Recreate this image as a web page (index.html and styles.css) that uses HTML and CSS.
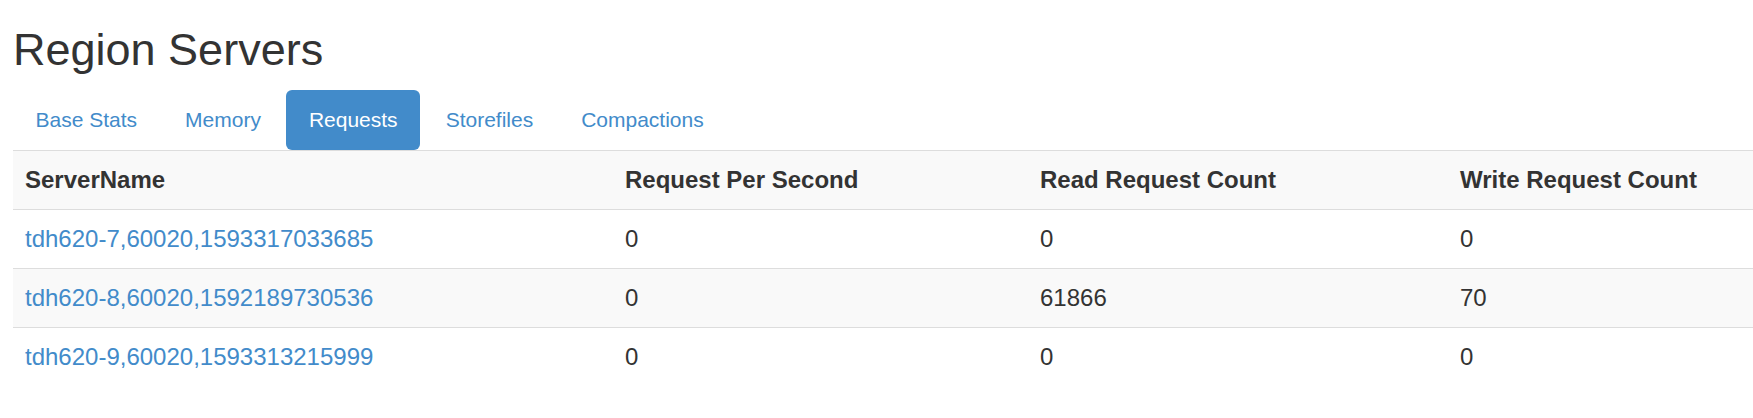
FILE: index.html
```html
<!DOCTYPE html>
<html>
<head>
<meta charset="utf-8">
<title>Region Servers</title>
<link rel="stylesheet" href="styles.css">
</head>
<body>
<div class="page">
  <h2 class="title">Region Servers</h2>
  <ul class="pills">
    <li><a href="#">Base Stats</a></li>
    <li><a href="#">Memory</a></li>
    <li class="active"><a href="#">Requests</a></li>
    <li><a href="#">Storefiles</a></li>
    <li><a href="#">Compactions</a></li>
  </ul>
  <table class="servers">
    <colgroup>
      <col class="c1"><col class="c2"><col class="c3"><col class="c4">
    </colgroup>
    <tbody>
      <tr>
        <th>ServerName</th>
        <th>Request Per Second</th>
        <th>Read Request Count</th>
        <th>Write Request Count</th>
      </tr>
      <tr>
        <td><a href="#">tdh620-7,60020,1593317033685</a></td>
        <td>0</td>
        <td>0</td>
        <td>0</td>
      </tr>
      <tr>
        <td><a href="#">tdh620-8,60020,1592189730536</a></td>
        <td>0</td>
        <td>61866</td>
        <td>70</td>
      </tr>
      <tr>
        <td><a href="#">tdh620-9,60020,1593313215999</a></td>
        <td>0</td>
        <td>0</td>
        <td>0</td>
      </tr>
    </tbody>
  </table>
</div>
</body>
</html>
```
FILE: styles.css
```css
html, body {
  margin: 0;
  padding: 0;
  background: #fff;
}
body {
  font-family: "Liberation Sans", Arial, Helvetica, sans-serif;
  color: #333;
  font-size: 21px;
  line-height: 30px;
}
.page {
  padding: 0 0 0 13px;
}
.title {
  margin: 25px 0 15px;
  font-size: 45px;
  line-height: 49.5px;
  font-weight: 500;
  color: #333;
}
.pills {
  list-style: none;
  margin: 0;
  padding: 0;
  display: flex;
}
.pills li {
  margin-right: 3px;
}
.pills a {
  display: block;
  padding: 15px 22.5px;
  line-height: 30px;
  font-size: 21px;
  color: #428bca;
  text-decoration: none;
  border-radius: 6px;
}
.pills li.active a {
  background: #428bca;
  color: #fff;
}
.servers {
  width: 100%;
  border-collapse: collapse;
  border-spacing: 0;
  table-layout: fixed;
  font-size: 24px;
  line-height: 34px;
}
.servers .c1 { width: 600px; }
.servers .c2 { width: 415px; }
.servers .c3 { width: 420px; }
.servers th,
.servers td {
  text-align: left;
  padding: 12px;
  border-top: 1px solid #ddd;
  vertical-align: top;
  white-space: nowrap;
}
.servers th {
  font-weight: bold;
}
.servers tr:nth-child(odd) {
  background: #f9f9f9;
}
.servers a {
  color: #428bca;
  text-decoration: none;
}
```
